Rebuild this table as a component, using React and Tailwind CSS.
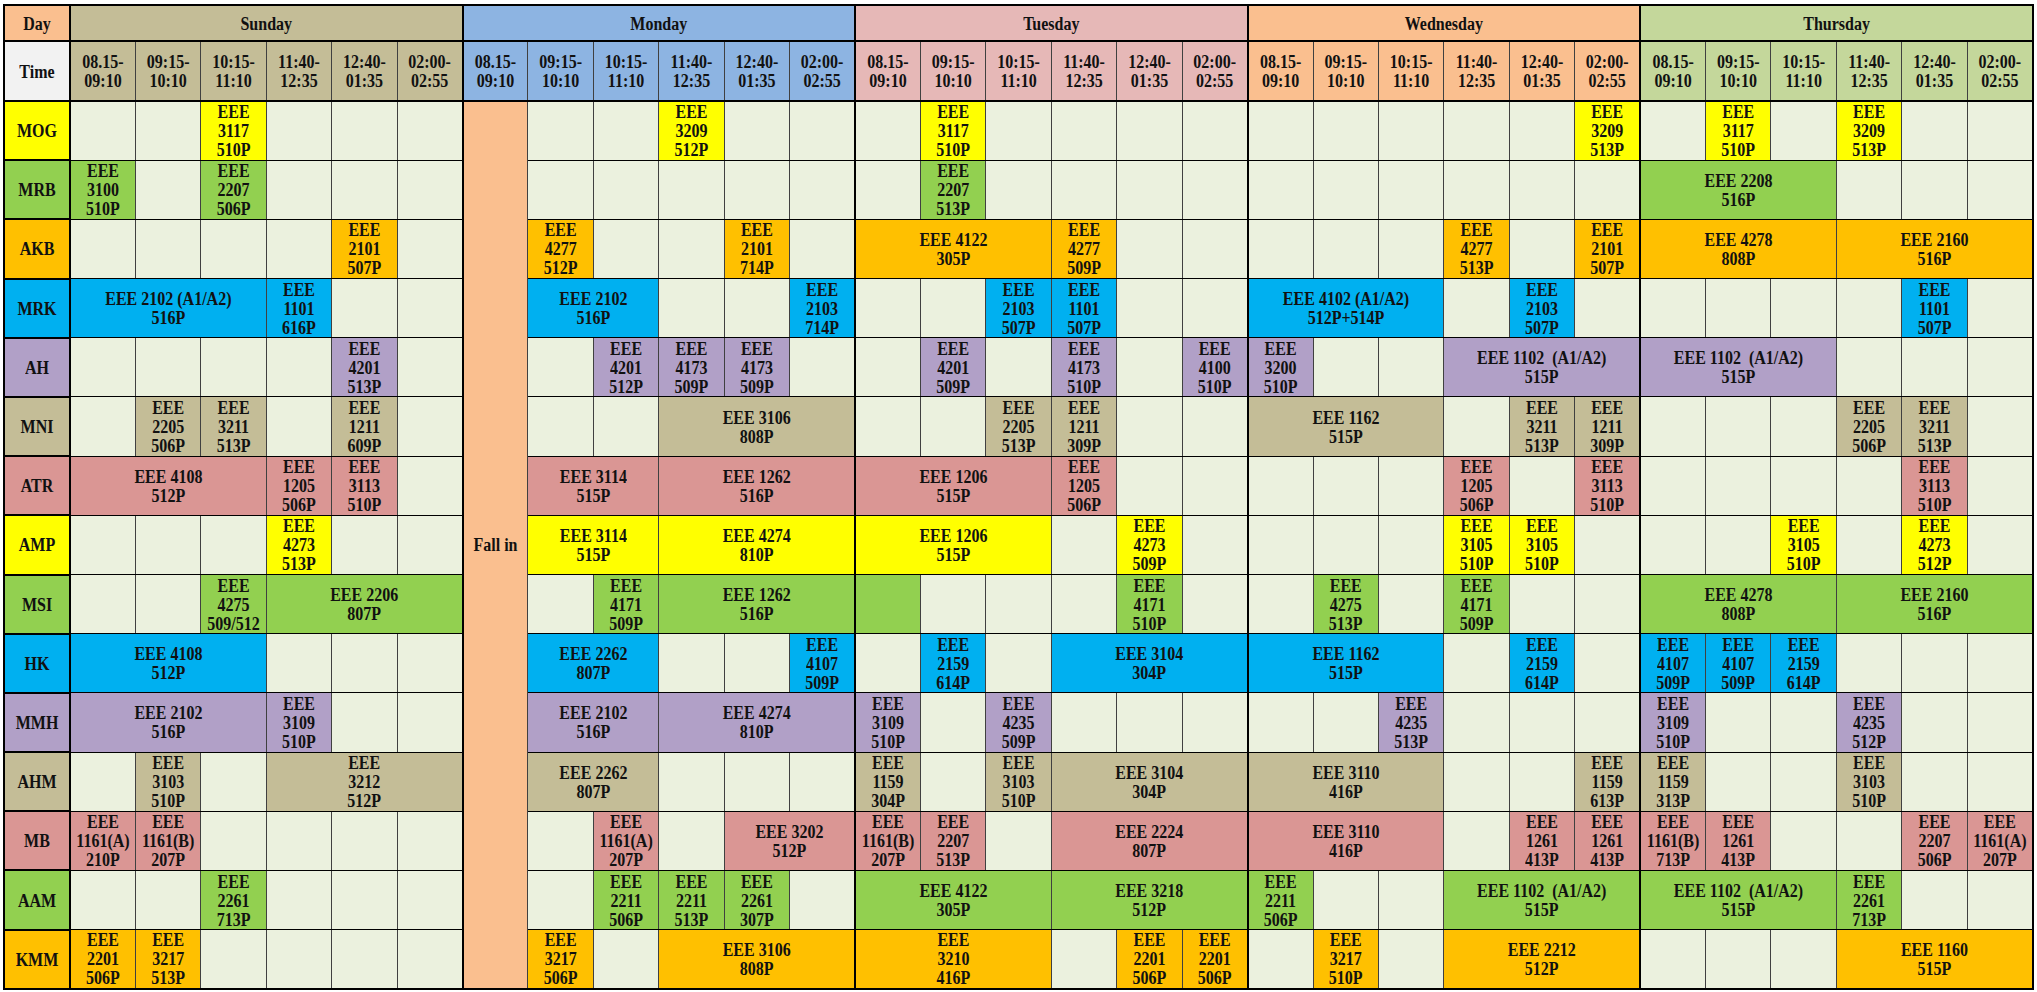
const DAYS = [
  { name: "Sunday", bg: "bg-[#c4bd97]" },
  { name: "Monday", bg: "bg-[#8db4e2]" },
  { name: "Tuesday", bg: "bg-[#e6b8b7]" },
  { name: "Wednesday", bg: "bg-[#fabf8f]" },
  { name: "Thursday", bg: "bg-[#c4d79b]" },
];

const TIMES = ["08.15-|09:10", "09:15-|10:10", "10:15-|11:10", "11:40-|12:35", "12:40-|01:35", "02:00-|02:55"];

const COLORS = {
  yellow: "bg-[#ffff00]",
  green: "bg-[#92d050]",
  gold: "bg-[#ffc000]",
  blue: "bg-[#00b0f0]",
  purple: "bg-[#b1a0c7]",
  tan: "bg-[#c4bd97]",
  rose: "bg-[#da9694]",
};

const A12 = "EEE 1102\u00a0 (A1/A2)|515P";

// "_" empty, "#" coloured but empty, "3*" = spans 3 slots, "|" = new line
const ROWS = [
  { name: "MOG", color: "yellow", days: [
    "_;_;EEE|3117|510P;_;_;_",
    "_;_;EEE|3209|512P;_;_",
    "_;EEE|3117|510P;_;_;_;_",
    "_;_;_;_;_;EEE|3209|513P",
    "_;EEE|3117|510P;_;EEE|3209|513P;_;_",
  ] },
  { name: "MRB", color: "green", days: [
    "EEE|3100|510P;_;EEE|2207|506P;_;_;_",
    "_;_;_;_;_",
    "_;EEE|2207|513P;_;_;_;_",
    "_;_;_;_;_;_",
    "3*EEE 2208|516P;_;_;_",
  ] },
  { name: "AKB", color: "gold", days: [
    "_;_;_;_;EEE|2101|507P;_",
    "EEE|4277|512P;_;_;EEE|2101|714P;_",
    "3*EEE 4122|305P;EEE|4277|509P;_;_",
    "_;_;_;EEE|4277|513P;_;EEE|2101|507P",
    "3*EEE 4278|808P;3*EEE 2160|516P",
  ] },
  { name: "MRK", color: "blue", days: [
    "3*EEE 2102 (A1/A2)|516P;EEE|1101|616P;_;_",
    "2*EEE 2102|516P;_;_;EEE|2103|714P",
    "_;_;EEE|2103|507P;EEE|1101|507P;_;_",
    "3*EEE 4102 (A1/A2)|512P+514P;_;EEE|2103|507P;_",
    "_;_;_;_;EEE|1101|507P;_",
  ] },
  { name: "AH", color: "purple", days: [
    "_;_;_;_;EEE|4201|513P;_",
    "_;EEE|4201|512P;EEE|4173|509P;EEE|4173|509P;_",
    "_;EEE|4201|509P;_;EEE|4173|510P;_;EEE|4100|510P",
    "EEE|3200|510P;_;_;3*" + A12,
    "3*" + A12 + ";_;_;_",
  ] },
  { name: "MNI", color: "tan", days: [
    "_;EEE|2205|506P;EEE|3211|513P;_;EEE|1211|609P;_",
    "_;_;3*EEE 3106|808P",
    "_;_;EEE|2205|513P;EEE|1211|309P;_;_",
    "3*EEE 1162|515P;_;EEE|3211|513P;EEE|1211|309P",
    "_;_;_;EEE|2205|506P;EEE|3211|513P;_",
  ] },
  { name: "ATR", color: "rose", days: [
    "3*EEE 4108|512P;EEE|1205|506P;EEE|3113|510P;_",
    "2*EEE 3114|515P;3*EEE 1262|516P",
    "3*EEE 1206|515P;EEE|1205|506P;_;_",
    "_;_;_;EEE|1205|506P;_;EEE|3113|510P",
    "_;_;_;_;EEE|3113|510P;_",
  ] },
  { name: "AMP", color: "yellow", days: [
    "_;_;_;EEE|4273|513P;_;_",
    "2*EEE 3114|515P;3*EEE 4274|810P",
    "3*EEE 1206|515P;_;EEE|4273|509P;_",
    "_;_;_;EEE|3105|510P;EEE|3105|510P;_",
    "_;_;EEE|3105|510P;_;EEE|4273|512P;_",
  ] },
  { name: "MSI", color: "green", days: [
    "_;_;EEE|4275|509/512;3*EEE 2206|807P",
    "_;EEE|4171|509P;3*EEE 1262|516P",
    "#;_;_;_;EEE|4171|510P;_",
    "_;EEE|4275|513P;_;EEE|4171|509P;_;_",
    "3*EEE 4278|808P;3*EEE 2160|516P",
  ] },
  { name: "HK", color: "blue", days: [
    "3*EEE 4108|512P;_;_;_",
    "2*EEE 2262|807P;_;_;EEE|4107|509P",
    "_;EEE|2159|614P;_;3*EEE 3104|304P",
    "3*EEE 1162|515P;_;EEE|2159|614P;_",
    "EEE|4107|509P;EEE|4107|509P;EEE|2159|614P;_;_;_",
  ] },
  { name: "MMH", color: "purple", days: [
    "3*EEE 2102|516P;EEE|3109|510P;_;_",
    "2*EEE 2102|516P;3*EEE 4274|810P",
    "EEE|3109|510P;_;EEE|4235|509P;_;_;_",
    "_;_;EEE|4235|513P;_;_;_",
    "EEE|3109|510P;_;_;EEE|4235|512P;_;_",
  ] },
  { name: "AHM", color: "tan", days: [
    "_;EEE|3103|510P;_;3*EEE|3212|512P",
    "2*EEE 2262|807P;_;_;_",
    "EEE|1159|304P;_;EEE|3103|510P;3*EEE 3104|304P",
    "3*EEE 3110|416P;_;_;EEE|1159|613P",
    "EEE|1159|313P;_;_;EEE|3103|510P;_;_",
  ] },
  { name: "MB", color: "rose", days: [
    "EEE|1161(A)|210P;EEE|1161(B)|207P;_;_;_;_",
    "_;EEE|1161(A)|207P;_;2*EEE 3202|512P",
    "EEE|1161(B)|207P;EEE|2207|513P;_;3*EEE 2224|807P",
    "3*EEE 3110|416P;_;EEE|1261|413P;EEE|1261|413P",
    "EEE|1161(B)|713P;EEE|1261|413P;_;_;EEE|2207|506P;EEE|1161(A)|207P",
  ] },
  { name: "AAM", color: "green", days: [
    "_;_;EEE|2261|713P;_;_;_",
    "_;EEE|2211|506P;EEE|2211|513P;EEE|2261|307P;_",
    "3*EEE 4122|305P;3*EEE 3218|512P",
    "EEE|2211|506P;_;_;3*" + A12,
    "3*" + A12 + ";EEE|2261|713P;_;_",
  ] },
  { name: "KMM", color: "gold", days: [
    "EEE|2201|506P;EEE|3217|513P;_;_;_;_",
    "EEE|3217|506P;_;3*EEE 3106|808P",
    "3*EEE|3210|416P;_;EEE|2201|506P;EEE|2201|506P",
    "_;EEE|3217|510P;_;3*EEE 2212|512P",
    "_;_;_;3*EEE 1160|515P",
  ] },
];

function parse(str) {
  return str.split(";").map((c) => {
    if (c === "_") return { span: 1, lines: null, fill: false };
    if (c === "#") return { span: 1, lines: null, fill: true };
    const m = c.match(/^(\d)\*(.*)$/);
    const span = m ? Number(m[1]) : 1;
    const text = m ? m[2] : c;
    return { span, lines: text.split("|"), fill: true };
  });
}

// the sheet's font is drawn a bit taller than it is wide
function Lines({ lines }) {
  return lines.map((l, i) => (
    <div key={i} className="scale-y-[1.12]">
      {l}
    </div>
  ));
}

function ScheduleRow({ row, index, last }) {
  const bg = COLORS[row.color];
  const cells = [];
  row.days.forEach((dayStr, d) => {
    let pos = 0;
    if (d === 1) {
      if (index === 0) {
        cells.push(
          <td
            key="fall"
            rowSpan={ROWS.length}
            className="bg-[#fabf8f] border border-[#404040] border-l-2 border-l-black border-b-2 border-b-black"
          >
            <Lines lines={["Fall in"]} />
          </td>
        );
      }
      pos = 1;
    }
    parse(dayStr).forEach((cell, i) => {
      const first = pos === 0;
      const lastCol = d === 4 && pos + cell.span === 6;
      cells.push(
        <td
          key={`${d}-${i}`}
          colSpan={cell.span}
          className={`border border-[#404040] border-t-black ${cell.fill ? bg : "bg-[#ebf1de]"} ${
            first ? "border-l-2 border-l-black" : ""
          } ${lastCol ? "border-r-2 border-r-black" : ""} ${last ? "border-b-2 border-b-black" : "border-b-black"}`}
        >
          {cell.lines && <Lines lines={cell.lines} />}
        </td>
      );
      pos += cell.span;
    });
  });

  return (
    <tr className="h-[59.2px]">
      <td className={`${bg} border-2 border-black`}>
        <Lines lines={[row.name]} />
      </td>
      {cells}
    </tr>
  );
}

export default function App() {
  return (
    <div className="w-[2037px] h-[992px] bg-white pt-[4px] pl-[3px] overflow-hidden">
      <table className="table-fixed border-collapse w-[2031px] text-center text-[16px] leading-[19px] font-bold text-[#111] font-['Liberation_Serif',serif]">
        <colgroup>
          <col className="w-[66px]" />
          {Array.from({ length: 30 }).map((_, i) => (
            <col key={i} />
          ))}
        </colgroup>
        <thead>
          <tr className="h-[36px]">
            <td className="bg-[#fabf8f] border-2 border-black">
              <Lines lines={["Day"]} />
            </td>
            {DAYS.map((d) => (
              <td key={d.name} colSpan={6} className={`${d.bg} border-2 border-black`}>
                <Lines lines={[d.name]} />
              </td>
            ))}
          </tr>
          <tr className="h-[60px]">
            <td className="bg-[#f2f2f2] border-2 border-black">
              <Lines lines={["Time"]} />
            </td>
            {DAYS.map((d, di) =>
              TIMES.map((t, i) => (
                <td
                  key={`${d.name}-${i}`}
                  className={`${d.bg} border border-[#404040] border-t-black border-b-2 border-b-black ${
                    i === 0 ? "border-l-2 border-l-black" : ""
                  } ${di === 4 && i === 5 ? "border-r-2 border-r-black" : ""}`}
                >
                  <Lines lines={t.split("|")} />
                </td>
              ))
            )}
          </tr>
        </thead>
        <tbody>
          {ROWS.map((row, i) => (
            <ScheduleRow key={row.name} row={row} index={i} last={i === ROWS.length - 1} />
          ))}
        </tbody>
      </table>
    </div>
  );
}
